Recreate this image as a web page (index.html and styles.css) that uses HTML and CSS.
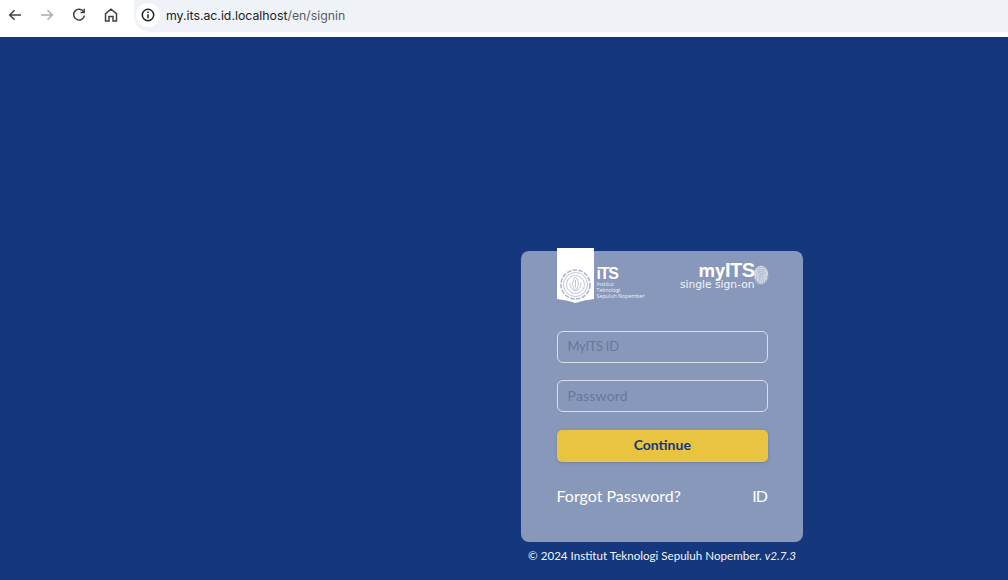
FILE: index.html
```html
<!DOCTYPE html>
<html lang="en">
<head>
<meta charset="utf-8">
<title>myITS Single Sign-On</title>
<link rel="stylesheet" href="styles.css">
</head>
<body>
<header class="toolbar">
  <nav class="nav-icons">
    <svg class="nav-icon" viewBox="0 0 16 16"><path d="M14 8H3M7.500 3.200 2.700 8l4.800 4.800"/></svg>
    <svg class="nav-icon nav-icon-off" viewBox="0 0 16 16"><path d="M2 8h11M8.500 3.200 13.300 8l-4.800 4.800"/></svg>
    <svg class="nav-icon" viewBox="0 0 16 16"><path d="M12.800 5A5.400 5.400 0 1 0 13.400 8.600"/><path d="M13.200 1.800v3.700H9.500"/></svg>
    <svg class="nav-icon" viewBox="0 0 16 16"><path d="M2.500 14V6.600L8 2.200l5.500 4.400V14H10V9.500H6V14Z"/></svg>
  </nav>
  <div class="omnibox">
    <span class="info-chip"><svg class="info-icon" viewBox="0 0 16 16"><circle cx="8" cy="8" r="5.700"/><path d="M8 7.200v4M8 4.600v1.300"/></svg></span>
    <span class="url"><span class="url-host">my.its.ac.id.localhost</span>/en/signin</span>
  </div>
</header>
<main class="page">
  <div class="login">
    <section class="card">
      <div class="brand">
        <div class="its-logo">
          <svg class="shield" viewBox="0 0 37 55">
            <path class="shield-bg" d="M0 0h37v51c-6 .8-13 2-18.500 4C13 53 6 51.800 0 51Z"/>
            <g class="seal">
              <circle cx="18.500" cy="36.500" r="14.500" stroke-dasharray="4.500 1.400" stroke-width="1.600"/>
              <circle cx="18.500" cy="36.500" r="12"/>
              <circle cx="18.500" cy="36.500" r="9"/>
              <path d="M18.500 29c-2.300 2.800-3.200 5-2.800 7.800.4 2.300 1.400 3.700 2.800 5.500 1.400-1.800 2.400-3.200 2.800-5.500.4-2.800-.5-5-2.800-7.800ZM13 35c0 3.800 1.400 6.500 5.500 8 4.100-1.500 5.500-4.200 5.500-8M18.500 32v7.500"/>
            </g>
          </svg>
          <div class="its-text">
            <span class="its-mark">iTS</span>
            <span class="its-line">Institut</span>
            <span class="its-line">Teknologi</span>
            <span class="its-line">Sepuluh Nopember</span>
          </div>
        </div>
        <div class="sso-logo">
          <div class="sso-top">
            <span class="sso-my">my</span><span class="sso-its">ITS</span>
            <svg class="finger" viewBox="0 0 16 20">
              <ellipse class="finger-pad" cx="8" cy="10" rx="7.500" ry="9.500"/>
              <path d="M1.500 10C1.500 5 4.500 1.500 8 1.500S14.500 5 14.500 10M3 14c-.8-3-.7-5 0-7 .8-2.300 2.700-3.700 5-3.700S12.200 4.700 13 7c.7 2 .6 5-.2 8M4.800 16c-.9-3-1.100-5.500-.6-8 .5-1.800 2-2.800 3.800-2.800s3.300 1 3.800 2.800c.5 2.500.2 5.500-.8 9M6.500 18c-.8-3-1-6-.6-9 .2-1 1-1.700 2.100-1.700S9.900 8 10.100 9c.4 3 0 6-1 9.500M8 9.500c.3 3 0 6-.8 9"/>
            </svg>
          </div>
          <span class="sso-sub">single sign-on</span>
        </div>
      </div>
      <form class="form">
        <input class="field field-id" type="text" placeholder="MyITS ID">
        <input class="field" type="password" placeholder="Password">
        <button class="submit" type="button">Continue</button>
      </form>
      <div class="links">
        <a class="link">Forgot Password?</a>
        <a class="link link-lang">ID</a>
      </div>
    </section>
    <footer class="copyright">© 2024 Institut Teknologi Sepuluh Nopember. <em>v2.7.3</em></footer>
  </div>
</main>
</body>
</html>
```
FILE: styles.css
```css
* { box-sizing: border-box; }
html, body { margin: 0; height: 100%; }
body {
  display: flex;
  flex-direction: column;
  overflow: hidden;
  font-family: "Lato", "Open Sans", sans-serif;
  background: #14377d;
}
.toolbar {
  flex: none;
  height: 37px;
  display: flex;
  align-items: flex-start;
  background: #fff;
}
.nav-icons {
  display: flex;
  gap: 16px;
  padding: 7px 0 0 7px;
}
.nav-icon {
  width: 16px;
  height: 16px;
  fill: none;
  stroke: #3f4247;
  stroke-width: 1.500;
}
.nav-icon-off { stroke: #a8abb0; }
.omnibox {
  flex: 1;
  margin-left: 15px;
  height: 32px;
  display: flex;
  align-items: center;
  gap: 6px;
  background: #eff3f8;
  border-radius: 0 0 0 16px;
  padding: 0 0 2px 2px;
}
.info-chip {
  width: 24px;
  height: 24px;
  border-radius: 50%;
  background: #fff;
  display: flex;
  align-items: center;
  justify-content: center;
}
.info-icon {
  width: 16px;
  height: 16px;
  fill: none;
  stroke: #202124;
  stroke-width: 1.500;
}
.url {
  font-family: "Inter", sans-serif;
  font-size: 12.300px;
  color: #5a5e64;
}
.url-host { color: #202124; }
.page {
  flex: 1;
  min-height: 0;
  display: flex;
  justify-content: flex-end;
  padding: 214px 205px 0 0;
}
.login {
  width: 282px;
  display: flex;
  flex-direction: column;
}
.card {
  height: 291px;
  background: #8898bb;
  border-radius: 8px;
  padding: 0 35px 0 35.500px;
}
.brand {
  height: 80px;
  display: flex;
  justify-content: space-between;
}
.its-logo {
  display: flex;
  margin-top: -3px;
}
.shield {
  flex: none;
  width: 37px;
  height: 55px;
}
.shield-bg { fill: #fff; }
.seal {
  fill: none;
  stroke: #aab6d0;
  stroke-width: .8;
}
.its-text {
  display: flex;
  flex-direction: column;
  margin: 19px 0 0 3px;
  color: #fff;
}
.its-mark {
  font-family: "Liberation Sans", sans-serif;
  font-size: 16px;
  font-weight: 700;
  line-height: 14px;
  letter-spacing: -1.200px;
}
.its-line {
  font-family: "Open Sans", sans-serif;
  font-size: 5.300px;
  line-height: 6px;
  color: #eef1f7;
  white-space: nowrap;
}
.sso-logo {
  width: 88px;
  margin-top: 11px;
  display: flex;
  flex-direction: column;
  color: #fff;
}
.sso-top {
  display: flex;
  align-items: baseline;
  padding-left: 18.500px;
  height: 18px;
}
.sso-my {
  font-family: "Open Sans", sans-serif;
  font-size: 17px;
  font-weight: 700;
  line-height: 16px;
}
.sso-its {
  font-family: "Liberation Sans", sans-serif;
  font-size: 20px;
  font-weight: 700;
  line-height: 16px;
  letter-spacing: -.400px;
}
.finger {
  flex: none;
  align-self: flex-start;
  width: 16px;
  height: 20px;
  fill: none;
  stroke: #e6eaf2;
  stroke-width: .8;
  margin: 3px 0 0 -2px;
}
.finger-pad { fill: rgba(255, 255, 255, .3); stroke: none; }
.sso-sub {
  font-family: "DejaVu Sans", sans-serif;
  font-size: 10.700px;
  line-height: 10px;
  color: #f2f4f9;
  white-space: nowrap;
}
.form {
  display: flex;
  flex-direction: column;
}
.field {
  height: 32px;
  margin-bottom: 17px;
  padding: 0 10px 2px;
  font-family: inherit;
  font-size: 14px;
  letter-spacing: .2px;
  color: #29395e;
  background: transparent;
  border: 1px solid #d8deea;
  border-radius: 6px;
  outline: none;
}
.field-id {
  font-size: 13px;
  letter-spacing: -.3px;
}
.field::placeholder { color: #69779b; opacity: 1; }
.submit {
  height: 32px;
  margin-top: 1px;
  padding: 0 0 3px;
  font-family: inherit;
  font-size: 14px;
  font-weight: 700;
  color: #14377d;
  background: #e9c440;
  border: 0;
  border-radius: 5px;
  box-shadow: 0 1px 3px rgba(40, 50, 80, .25);
}
.links {
  display: flex;
  justify-content: space-between;
  margin-top: 24px;
  font-size: 16px;
  line-height: 20px;
  color: #fff;
}
.link-lang { letter-spacing: -1px; padding-right: 1px; }
.copyright {
  margin-top: 6px;
  text-align: center;
  font-size: 11.600px;
  line-height: 15px;
  color: #f3f5fa;
  white-space: nowrap;
}
```
